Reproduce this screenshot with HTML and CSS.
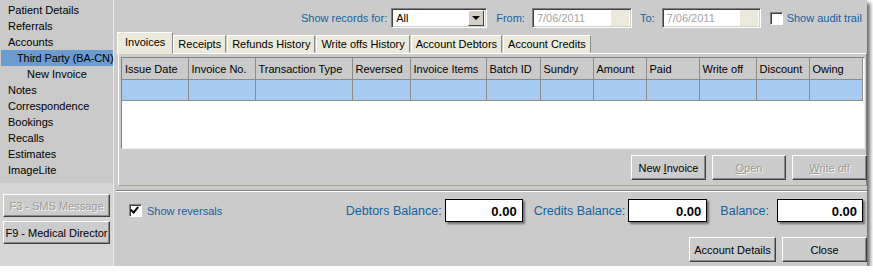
FILE: index.html
```html
<!DOCTYPE html>
<html lang="en">
<head>
    <meta charset="UTF-8">
    <title>Accounts - Invoices</title>
    <link rel="stylesheet" href="styles.css">
</head>
<body>
    <div class="window">
        <aside class="nav">
            <ul class="nav-list">
                <li>Patient Details</li>
                <li>Referrals</li>
                <li>Accounts</li>
                <li class="sub selected">Third Party (BA-CN)</li>
                <li class="subsub">New Invoice</li>
                <li>Notes</li>
                <li>Correspondence</li>
                <li>Bookings</li>
                <li>Recalls</li>
                <li>Estimates</li>
                <li>ImageLite</li>
            </ul>
            <div class="nav-buttons">
                <button class="btn nav-btn disabled">F3 - SMS Message</button>
                <button class="btn nav-btn">F9 - Medical Director</button>
            </div>
        </aside>

        <main class="main">
            <section class="upper">
                <div class="filters">
                    <span class="label">Show records for:</span>
                    <div class="field select">
                        <span>All</span>
                        <span class="drop"><i></i></span>
                    </div>
                    <span class="label from">From:</span>
                    <div class="field date">
                        <span>7/06/2011</span>
                        <span class="pick"></span>
                    </div>
                    <span class="label to">To:</span>
                    <div class="field date date-to">
                        <span>7/06/2011</span>
                        <span class="pick"></span>
                    </div>
                    <span class="check"></span>
                    <span class="label">Show audit trail</span>
                </div>

                <div class="tabs">
                    <div class="tab active">Invoices</div>
                    <div class="tab">Receipts</div>
                    <div class="tab">Refunds History</div>
                    <div class="tab">Write offs History</div>
                    <div class="tab">Account Debtors</div>
                    <div class="tab">Account Credits</div>
                </div>

                <div class="tab-panel">
                    <div class="grid">
                        <table>
                            <colgroup>
                                <col style="width:66px"><col style="width:67px"><col style="width:97px">
                                <col style="width:58px"><col style="width:76px"><col style="width:54px">
                                <col style="width:53px"><col style="width:53px"><col style="width:53px">
                                <col style="width:57px"><col style="width:53px"><col style="width:53px">
                            </colgroup>
                            <thead>
                                <tr>
                                    <th>Issue Date</th>
                                    <th>Invoice No.</th>
                                    <th>Transaction Type</th>
                                    <th>Reversed</th>
                                    <th>Invoice Items</th>
                                    <th>Batch ID</th>
                                    <th>Sundry</th>
                                    <th>Amount</th>
                                    <th>Paid</th>
                                    <th>Write off</th>
                                    <th>Discount</th>
                                    <th>Owing</th>
                                </tr>
                            </thead>
                            <tbody>
                                <tr class="row-selected">
                                    <td></td><td></td><td></td><td></td><td></td><td></td>
                                    <td></td><td></td><td></td><td></td><td></td><td></td>
                                </tr>
                            </tbody>
                        </table>
                    </div>
                    <div class="grid-actions">
                        <button class="btn new-invoice">New <u>I</u>nvoice</button>
                        <button class="btn open disabled"><u>O</u>pen</button>
                        <button class="btn write-off disabled"><u>W</u>rite off</button>
                    </div>
                </div>
            </section>

            <section class="lower">
                <div class="balances">
                    <div class="reversals">
                        <span class="check checked"></span>
                        <span class="label">Show reversals</span>
                    </div>
                    <span class="bal-label">Debtors Balance:</span>
                    <div class="amount debtors">0.00</div>
                    <span class="bal-label">Credits Balance:</span>
                    <div class="amount credits">0.00</div>
                    <span class="bal-label total-label">Balance:</span>
                    <div class="amount total">0.00</div>
                </div>
                <div class="actions">
                    <button class="btn details">Account Details</button>
                    <button class="btn close">Close</button>
                </div>
            </section>
        </main>
    </div>
</body>
</html>
```

FILE: styles.css
```css
body {
    margin: 0;
    background: #ffffff;
    font-family: "Liberation Sans", Arial, sans-serif;
    font-size: 11px;
    color: #000;
}

.window {
    width: 867px;
    height: 266px;
    display: flex;
    background: #cbcbcb;
    box-shadow: 3px 3px 4px rgba(0, 0, 0, 0.6);
}

/* Left navigation */
.nav {
    width: 113px;
    display: flex;
    flex-direction: column;
    border-right: 1px solid #ececec;
}

.nav-list {
    height: 181px;
    margin: 0;
    padding: 2px 0 0;
    list-style: none;
    background: #c9c9c9;
}

.nav-list li {
    height: 16px;
    line-height: 16px;
    padding-left: 8px;
    white-space: nowrap;
}

.nav-list .sub {
    padding-left: 16px;
    margin-left: 1px;
    letter-spacing: -0.1px;
}

.nav-list .subsub {
    padding-left: 27px;
}

.nav-list .selected {
    background: #6b9bd0;
}

.nav-buttons {
    flex: 1;
    background: #d5d5d5;
    padding: 11px 3px 0;
    display: flex;
    flex-direction: column;
    gap: 4px;
}

/* Buttons */
.btn {
    font-family: inherit;
    font-size: 11px;
    color: #000;
    background: #cccccc;
    border: 1px solid;
    border-color: #ffffff #404040 #404040 #ffffff;
    box-shadow: inset -1px -1px 0 #8a8a8a;
    padding: 0;
    height: 25px;
    box-sizing: border-box;
}

.btn u {
    text-decoration: underline;
}

.btn.disabled {
    color: #9c9c9c;
    text-shadow: 1px 1px 0 #f4f4f4;
}

.nav-btn {
    width: 107px;
    height: 23px;
}

/* Main area */
.main {
    flex: 1;
    margin-left: 2px;
    display: flex;
    flex-direction: column;
}

.upper {
    height: 190px;
    display: flex;
    flex-direction: column;
    padding-bottom: 4px;
    box-sizing: border-box;
}

.label {
    color: #14629f;
    white-space: nowrap;
}

.filters {
    height: 20px;
    margin: 8px 0 4px;
    padding-left: 185px;
    display: flex;
    align-items: center;
}

.field {
    height: 20px;
    box-sizing: border-box;
    background: #ffffff;
    border: 1px solid;
    border-color: #808080 #ffffff #ffffff #808080;
    box-shadow: inset 1px 1px 0 #404040, inset -1px -1px 0 #d4d0c8;
    display: flex;
    align-items: center;
    justify-content: space-between;
    padding: 2px 2px 2px 4px;
}

.select {
    width: 96px;
    margin-left: 4px;
}

.drop {
    width: 16px;
    height: 16px;
    box-sizing: border-box;
    background: #d4d0c8;
    border: 1px solid;
    border-color: #ffffff #404040 #404040 #ffffff;
    display: flex;
    align-items: center;
    justify-content: center;
}

.drop i {
    border-left: 4px solid transparent;
    border-right: 4px solid transparent;
    border-top: 4px solid #000;
}

.from {
    margin-left: 9px;
}

.date {
    width: 100px;
    margin-left: 7px;
    color: #a4a4a4;
}

.date-to {
    width: 99px;
}

.pick {
    width: 18px;
    height: 16px;
    background: #ebe9dc;
}

.to {
    margin-left: 8px;
}

.check {
    width: 13px;
    height: 13px;
    box-sizing: border-box;
    background: #ffffff;
    border: 1px solid;
    border-color: #808080 #ffffff #ffffff #808080;
    box-shadow: inset 1px 1px 0 #404040;
    margin: 0 4px 0 9px;
    position: relative;
}

.check.checked::after {
    content: "";
    position: absolute;
    left: 2px;
    top: 0;
    width: 3px;
    height: 6px;
    border: solid #000;
    border-width: 0 2px 2px 0;
    transform: rotate(40deg);
}

/* Tabs */
.tabs {
    height: 21px;
    padding-left: 1px;
    display: flex;
    align-items: flex-end;
    position: relative;
    z-index: 1;
}

.tab {
    height: 18px;
    line-height: 17px;
    padding: 0 4px;
    margin-right: 1px;
    box-sizing: border-box;
    background: #ebe9da;
    border: 1px solid;
    border-color: #ffffff #8a8a8a transparent #ffffff;
    white-space: nowrap;
}

.tab.active {
    height: 22px;
    line-height: 19px;
    padding: 0 7px;
    margin-bottom: -1px;
    margin-right: 0;
}

.tab-panel {
    flex: 1;
    margin-left: 2px;
    padding: 3px 1px 0 2px;
    border: 1px solid;
    border-color: #ffffff #808080 #a8a594 #ffffff;
    display: flex;
    flex-direction: column;
}

.grid {
    height: 92px;
    box-sizing: border-box;
    background: #ffffff;
    border: 1px solid;
    border-color: #808080 #f0f0f0 #f0f0f0 #808080;
    overflow: hidden;
}

.grid table {
    width: 740px;
    table-layout: fixed;
    border-collapse: collapse;
}

.grid th {
    height: 21px;
    padding: 0 3px;
    background: #cacaca;
    border: 1px solid #8c8c8c;
    border-top: 0;
    font-weight: normal;
    text-align: left;
    white-space: nowrap;
    overflow: hidden;
}

.grid th:first-child,
.grid td:first-child {
    border-left: 0;
}

.grid td {
    height: 20px;
    padding: 0;
    border: 1px solid #8c8c8c;
}

.row-selected td {
    background: #a6caf0;
}

.grid-actions {
    display: flex;
    justify-content: flex-end;
    gap: 6px;
    padding-top: 6px;
}

.new-invoice {
    width: 75px;
}

.open {
    width: 74px;
}

.write-off {
    width: 75px;
    margin-right: -2px;
}

/* Lower section */
.lower {
    flex: 1;
    border-top: 1px solid #808080;
    box-shadow: inset 0 1px 0 #ffffff;
    padding: 8px 4px 0 13px;
}

.balances {
    height: 23px;
    display: flex;
    align-items: center;
}

.reversals {
    display: flex;
    align-items: center;
    margin-right: auto;
}

.reversals .check {
    margin: 0 5px 0 0;
}

.bal-label {
    color: #14629f;
    font-size: 12.5px;
    white-space: nowrap;
    margin-right: 3px;
}

.total-label {
    margin-right: 8px;
}

.amount {
    height: 23px;
    line-height: 23px;
    box-sizing: border-box;
    background: #ffffff;
    border: 1px solid #000;
    box-shadow: 2px 2px 2px rgba(0, 0, 0, 0.45);
    text-align: right;
    padding-right: 5px;
    font-size: 13px;
    font-weight: bold;
}

.debtors {
    width: 78px;
    margin-right: 11px;
}

.credits {
    width: 79px;
    margin-right: 13px;
}

.total {
    width: 86px;
}

.actions {
    display: flex;
    justify-content: flex-end;
    gap: 6px;
    margin-top: 15px;
    margin-right: -4px;
}

.details {
    width: 87px;
}

.close {
    width: 85px;
}
```
